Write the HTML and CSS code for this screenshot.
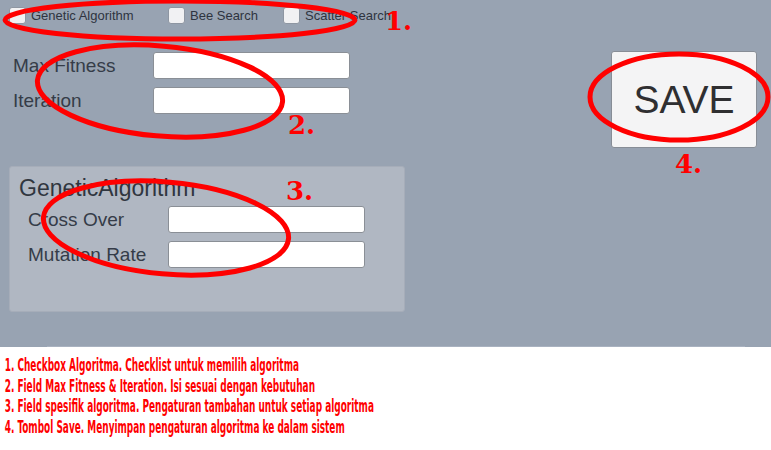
FILE: index.html
```html
<!DOCTYPE html>
<html>
<head>
<meta charset="utf-8">
<link rel="stylesheet" href="styles.css">
</head>
<body>
<div class="screen">
  <div class="checks">
    <label class="check"><span class="box"></span><span>Genetic Algorithm</span></label>
    <label class="check"><span class="box"></span><span>Bee Search</span></label>
    <label class="check"><span class="box"></span><span>Scatter Search</span></label>
  </div>
  <div class="main">
    <div class="fields">
      <div class="row"><span class="lbl">Max Fitness</span><span class="input"></span></div>
      <div class="row"><span class="lbl">Iteration</span><span class="input"></span></div>
    </div>
    <div class="save">SAVE</div>
  </div>
  <div class="panel">
    <div class="ptitle">GeneticAlgorithm</div>
    <div class="prow"><span class="plbl">Cross Over</span><span class="input"></span></div>
    <div class="prow"><span class="plbl">Mutation Rate</span><span class="input"></span></div>
  </div>
  <div class="baseline"></div>
  <svg class="marks" width="771" height="347" viewBox="0 0 771 347">
    <g fill="none" stroke="#ff0000" stroke-width="5">
      <ellipse cx="180" cy="20" rx="175" ry="19"/>
      <ellipse cx="160" cy="91" rx="123" ry="45" transform="rotate(5 160 91)"/>
      <ellipse cx="166" cy="228" rx="123" ry="46" transform="rotate(5 166 228)"/>
      <ellipse cx="679" cy="97" rx="89" ry="43"/>
    </g>
  </svg>
  <span class="num n1">1.</span>
  <span class="num n2">2.</span>
  <span class="num n3">3.</span>
  <span class="num n4">4.</span>
</div>
<div class="notes">
  <div>1. Checkbox Algoritma. Checklist untuk memilih algoritma</div>
  <div>2. Field Max Fitness &amp; Iteration. Isi sesuai dengan kebutuhan</div>
  <div>3. Field spesifik algoritma. Pengaturan tambahan untuk setiap algoritma</div>
  <div>4. Tombol Save. Menyimpan pengaturan algoritma ke dalam sistem</div>
</div>
</body>
</html>
```
FILE: styles.css
```css
* { box-sizing: border-box; }
html, body { margin: 0; padding: 0; background: #fff; }
body { width: 771px; height: 450px; overflow: hidden; font-family: "Liberation Sans", Arial, sans-serif; }

.screen {
  position: relative;
  height: 347px;
  background: #98a3b2;
  padding-top: 7px;
  overflow: hidden;
}

.checks {
  display: grid;
  grid-template-columns: 159px 115px auto;
  padding-left: 9px;
  height: 17px;
}
.check { display: flex; align-items: center; gap: 5px; font-size: 13px; color: #2e3440; }
.box {
  width: 17px; height: 17px;
  background: #f1f1f3;
  border: 1px solid #8e96a2;
  border-radius: 3px;
}

.main {
  display: flex;
  justify-content: space-between;
  margin-top: 27px;
  padding-left: 13px;
  padding-right: 14px;
}
.fields { display: flex; flex-direction: column; gap: 8px; margin-top: 1px; }
.row { display: flex; align-items: center; height: 27px; }
.lbl { width: 140px; font-size: 19px; color: #353c48; }
.input {
  width: 197px; height: 27px;
  background: #fff;
  border: 1px solid #8a8f96;
  border-radius: 3px;
}
.save {
  width: 146px; height: 97px;
  background: #f4f4f5;
  border: 1px solid #878d96;
  border-radius: 3px;
  display: flex; align-items: center; justify-content: center;
  font-size: 39px;
  color: #2f2f31;
}

.panel {
  margin: 18px 0 0 9px;
  width: 396px; height: 146px;
  background: #b0b7c2;
  border: 1px solid #a6adb9;
  border-radius: 3px;
  padding: 9px 0 0 9px;
}
.ptitle { font-size: 23px; color: #30363f; height: 24px; line-height: 24px; }
.prow { display: flex; align-items: center; height: 27px; margin-top: 8px; padding-left: 9px; }
.ptitle + .prow { margin-top: 6px; }
.plbl { width: 140px; font-size: 19px; color: #353c48; }

.baseline {
  position: absolute;
  left: 47px; right: 26px; bottom: 0;
  height: 1px;
  background: #a9b2c0;
}

.marks { position: absolute; left: 0; top: 0; }
.num {
  position: absolute;
  font-family: "DejaVu Serif", "Liberation Serif", serif;
  font-weight: bold;
  font-size: 26px;
  color: #ff0000;
  line-height: 1;
}
.n1 { left: 385px; top: 8px; }
.n2 { left: 288px; top: 112px; }
.n3 { left: 286px; top: 178px; }
.n4 { left: 675px; top: 151px; }

.notes {
  padding: 8px 0 0 8px;
  font-family: "DejaVu Sans Condensed", "DejaVu Sans", sans-serif;
  font-stretch: condensed;
  font-weight: bold;
  font-size: 17px;
  line-height: 20.7px;
  color: #ff0000;
  white-space: nowrap;
  transform: scaleX(0.585);
  transform-origin: 0 0;
}
```
